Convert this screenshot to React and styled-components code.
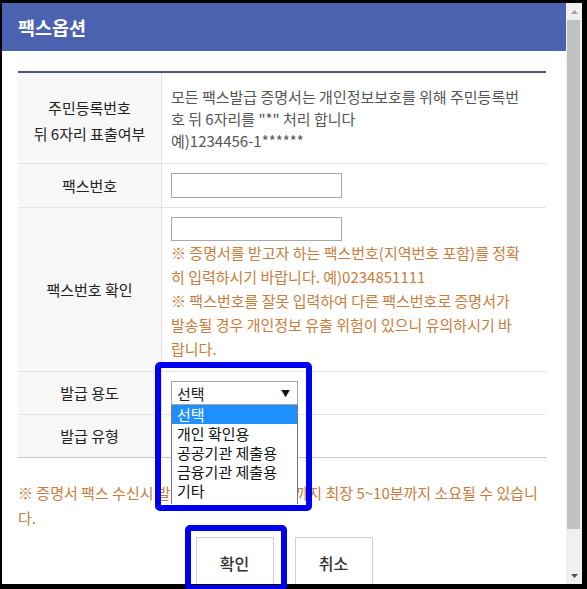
import React from "react";
import styled, { createGlobalStyle } from "styled-components";

const GlobalStyle = createGlobalStyle`
  html, body { margin: 0; padding: 0; background: #000; }
  body { font-family: "Noto Sans CJK KR", "Noto Sans", sans-serif; }
  * { box-sizing: border-box; }
`;

const Screen = styled.div`
  position: relative;
  width: 587px;
  height: 589px;
  padding: 3px 5px 5px 2px;
  background: #000;
  overflow: hidden;
`;

const Window = styled.div`
  display: flex;
  width: 580px;
  height: 581px;
  background: #fff;
`;

const Content = styled.div`
  flex: 1;
  overflow: hidden;
  background: #fff;
`;

const Header = styled.div`
  height: 48px;
  background: #4b62b0;
  color: #fff;
  display: flex;
  align-items: center;
  padding-left: 16px;
  font-size: 18.5px;
  font-weight: 700;
`;

const Body = styled.div`
  padding: 20px 20px 0 16px;
`;

const Table = styled.table`
  width: 528px;
  border-collapse: separate;
  border-spacing: 0;
  border-top: 2px solid #4d5775;
  table-layout: fixed;
`;

const Th = styled.th`
  width: 144px;
  background: #f7f7f7;
  border-right: 1px solid #e3e3e3;
  border-bottom: 1px solid ${(p) => (p.$last ? "#c6c6c6" : "#e3e3e3")};
  font-weight: 400;
  font-size: 15px;
  color: #222;
  text-align: center;
  vertical-align: middle;
  line-height: 26px;
  padding: ${(p) => p.$pt || 0}px 0 0;
  white-space: nowrap;
`;

const Td = styled.td`
  padding: ${(p) => p.$pad || "9px 10px 9px 9px"};
  border-bottom: 1px solid ${(p) => (p.$last ? "#c6c6c6" : "#e3e3e3")};
  vertical-align: top;
  font-size: 15px;
  color: #555;
`;

const Lines = styled.div`
  line-height: ${(p) => p.$lh}px;
  color: ${(p) => (p.$warn ? "#c97c3c" : "#555")};
  white-space: nowrap;
`;

const Input = styled.div`
  display: block;
  width: 171px;
  height: ${(p) => p.$h}px;
  border: 1px solid #a9a9a9;
  background: #fff;
`;

const SelectWrap = styled.div`
  position: relative;
  width: 127px;
  height: 24px;
`;

const SelectBox = styled.div`
  display: flex;
  align-items: center;
  justify-content: space-between;
  height: 24px;
  border: 1px solid #a6a6a6;
  padding: 0 7px 0 5px;
  font-size: 15px;
  color: #222;
  background: #fff;
`;

const Arrow = styled.span`
  font-size: 9px;
  color: #111;
`;

const List = styled.ul`
  position: absolute;
  top: 24px;
  left: 0;
  width: 127px;
  margin: 0;
  padding: 0 0 4px;
  list-style: none;
  background: #fff;
  border-left: 1px solid #777;
  border-right: 1px solid #777;
  z-index: 2;
`;

const Option = styled.li`
  height: 19px;
  line-height: 19px;
  padding-left: 5px;
  font-size: 15px;
  color: ${(p) => (p.$active ? "#fff" : "#111")};
  background: ${(p) => (p.$active ? "#1e90ff" : "#fff")};
  white-space: nowrap;
`;

const Spacer = styled.div`
  height: 24px;
`;

const Note = styled.p`
  margin: 22px 0 0;
  font-size: 15px;
  line-height: 25px;
  color: #c97c3c;
  white-space: nowrap;
`;

const ButtonRow = styled.div`
  display: flex;
  justify-content: center;
  gap: 21px;
  margin: 7px -20px 0 -16px;
`;

const Button = styled.button`
  width: 78px;
  height: 52px;
  border: 1px solid #cfcfcf;
  background: #fff;
  font-family: inherit;
  font-size: 16px;
  font-weight: 500;
  color: #333;
  padding: 0;
`;

const ScrollBar = styled.div`
  width: 16px;
  display: flex;
  flex-direction: column;
  background: #f0f0f0;
`;

const ScrollArrow = styled.div`
  height: 17px;
  display: flex;
  align-items: center;
  justify-content: center;
`;

const Track = styled.div`
  flex: 1;
  display: flex;
  flex-direction: column;
  padding: 0 2px 38px 1px;
`;

const Thumb = styled.div`
  flex: 1;
  background: #c1c1c1;
`;

const Highlight = styled.div`
  position: absolute;
  left: ${(p) => p.$x}px;
  top: ${(p) => p.$y}px;
  width: ${(p) => p.$w}px;
  height: ${(p) => p.$h}px;
  border: 6px solid #0000f0;
  border-radius: 5px;
  pointer-events: none;
  z-index: 5;
`;

const options = ["선택", "개인 확인용", "공공기관 제출용", "금융기관 제출용", "기타"];

export default function App() {
  return (
    <>
      <GlobalStyle />
      <Screen>
        <Window>
          <Content>
            <Header>팩스옵션</Header>
            <Body>
              <Table>
                <tbody>
                  <tr>
                    <Th $pt={5}>
                      주민등록번호
                      <br />뒤 6자리 표출여부
                    </Th>
                    <Td $pad="13px 10px 11px 9px">
                      <Lines $lh={22}>
                        모든 팩스발급 증명서는 개인정보보호를 위해 주민등록번
                        <br />호 뒤 6자리를 "*" 처리 합니다
                        <br />예)1234456-1******
                      </Lines>
                    </Td>
                  </tr>
                  <tr>
                    <Th>팩스번호</Th>
                    <Td>
                      <Input $h={25} />
                    </Td>
                  </tr>
                  <tr>
                    <Th>팩스번호 확인</Th>
                    <Td $pad="9px 10px 10px 9px">
                      <Input $h={24} />
                      <Lines $lh={24} $warn>
                        ※ 증명서를 받고자 하는 팩스번호(지역번호 포함)를 정확
                        <br />히 입력하시기 바랍니다. 예)0234851111
                        <br />※ 팩스번호를 잘못 입력하여 다른 팩스번호로 증명서가
                        <br />발송될 경우 개인정보 유출 위험이 있으니 유의하시기 바
                        <br />랍니다.
                      </Lines>
                    </Td>
                  </tr>
                  <tr>
                    <Th>발급 용도</Th>
                    <Td>
                      <SelectWrap>
                        <SelectBox>
                          <span>선택</span>
                          <Arrow>▼</Arrow>
                        </SelectBox>
                        <List>
                          {options.map((o, i) => (
                            <Option key={o} $active={i === 0}>
                              {o}
                            </Option>
                          ))}
                        </List>
                      </SelectWrap>
                    </Td>
                  </tr>
                  <tr>
                    <Th $last>발급 유형</Th>
                    <Td $last>
                      <Spacer />
                    </Td>
                  </tr>
                </tbody>
              </Table>
              <Note>
                ※ 증명서 팩스 수신시 발급 신청 후 팩스 도착까지 최장 5~10분까지 소요될 수 있습니
                <br />다.
              </Note>
              <ButtonRow>
                <Button>확인</Button>
                <Button>취소</Button>
              </ButtonRow>
            </Body>
          </Content>
          <ScrollBar>
            <ScrollArrow>
              <svg width="7" height="4" viewBox="0 0 7 4">
                <path d="M0 4 L3.5 0 L7 4 Z" fill="#a3a3a3" />
              </svg>
            </ScrollArrow>
            <Track>
              <Thumb />
            </Track>
            <ScrollArrow>
              <svg width="7" height="4" viewBox="0 0 7 4">
                <path d="M0 0 L3.5 4 L7 0 Z" fill="#505050" />
              </svg>
            </ScrollArrow>
          </ScrollBar>
        </Window>
        <Highlight $x={155} $y={362} $w={157} $h={149} />
        <Highlight $x={185} $y={525} $w={102} $h={66} />
      </Screen>
    </>
  );
}
